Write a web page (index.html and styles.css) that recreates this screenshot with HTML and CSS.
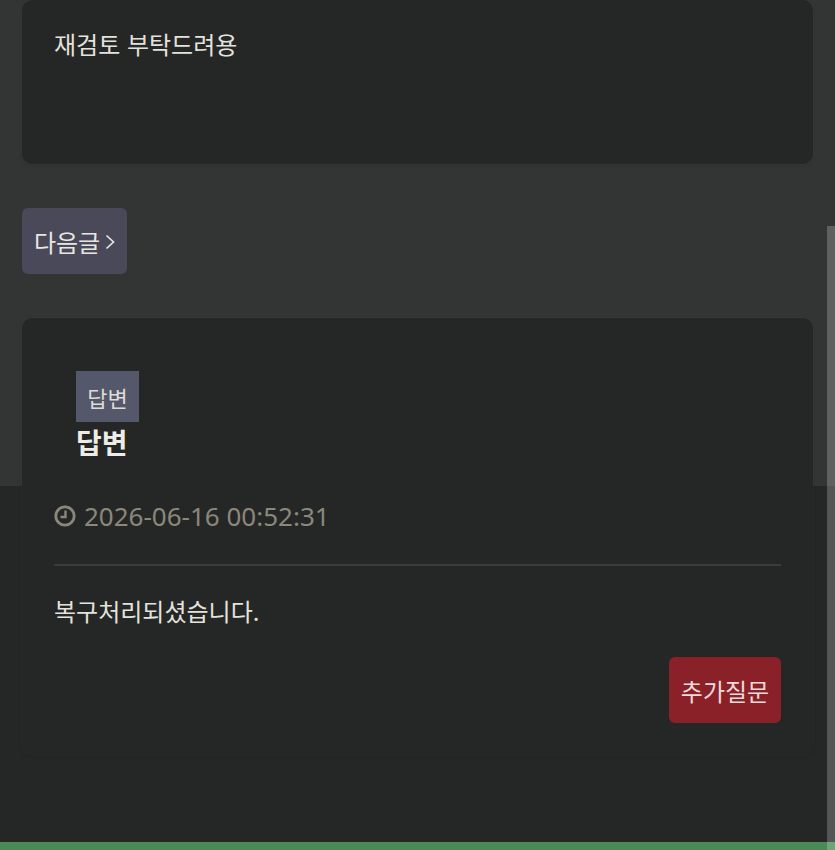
FILE: index.html
```html
<!DOCTYPE html>
<html lang="ko">
<head>
<meta charset="utf-8"/>
<title>답변</title>
<link rel="stylesheet" href="styles.css">
</head>
<body>
<div class="page">
  <div class="card card-question">
    <p class="body-text">재검토 부탁드려용</p>
  </div>

  <a class="btn btn-next">다음글
    <svg class="chevron" viewBox="0 0 10 16" width="10" height="16"><path d="M1.5 1.5 8.5 8 1.5 14.5" fill="none" stroke="currentColor" stroke-width="1.7"/></svg>
  </a>

  <div class="card card-answer">
    <div class="answer-head">
      <span class="badge">답변</span>
      <h3 class="answer-title">답변</h3>
    </div>
    <div class="answer-date">
      <svg class="clock" viewBox="0 0 22 22" width="22" height="22"><circle cx="11" cy="11" r="9.2" fill="none" stroke="currentColor" stroke-width="2.8"/><path d="M11.5 5.5V12H6.5" fill="none" stroke="currentColor" stroke-width="2.4"/></svg>
      <span>2026-06-16 00:52:31</span>
    </div>
    <hr class="divider">
    <p class="body-text answer-text">복구처리되셨습니다.</p>
    <div class="answer-actions">
      <a class="btn btn-ask">추가질문</a>
    </div>
  </div>
</div>
<div class="footer-bar"></div>
<div class="scrollbar"></div>
</body>
</html>
```

FILE: styles.css
```css
html, body {
   margin: 0;
   height: 850px;
   overflow: hidden;
}

body {
   position: relative;
   font-family: "Noto Sans CJK KR", "Noto Sans", sans-serif;
   background-color: #252726;
   color: #e4e2dc;
}

.page {
   height: 842px;
   box-sizing: border-box;
   padding: 0 22px;
   width: 835px;
   background: linear-gradient(to bottom, #333534 486px, #252726 486px);
}

.card {
   width: 791px;
   box-sizing: border-box;
   background-color: #252726;
   border-radius: 10px;
   padding: 0 32px;
   box-shadow: 0 1px 4px rgba(0, 0, 0, 0.12), 0 0 0 1px rgba(255, 255, 255, 0.02);
}

.card-question {
   height: 164px;
   padding-top: 26px;
}

.body-text {
   margin: 0;
   font-size: 24px;
   line-height: 36px;
}

.btn {
   display: inline-flex;
   align-items: center;
   justify-content: center;
   height: 66px;
   box-sizing: border-box;
   border-radius: 6px;
   font-size: 24px;
   color: #e8e6e2;
}

.btn-next {
   display: flex;
   width: 105px;
   margin-top: 44px;
   gap: 5px;
   background-color: #4a4959;
}

.chevron {
   margin-top: 1px;
}

.card-answer {
   height: 437px;
   margin-top: 44px;
   padding-top: 53px;
}

.answer-head {
   padding-left: 22px;
}

.badge {
   display: flex;
   align-items: center;
   justify-content: center;
   width: 63px;
   height: 51px;
   background-color: #55586a;
   font-size: 22px;
   color: #dddcd8;
}

.answer-title {
   margin: 0;
   font-size: 28px;
   line-height: 40px;
   font-weight: 700;
   color: #eeece6;
}

.answer-date {
   display: flex;
   align-items: center;
   gap: 8px;
   margin-top: 36px;
   font-family: "Noto Sans", sans-serif;
   font-size: 26px;
   line-height: 36px;
   color: #8b877b;
}

.divider {
   height: 0;
   margin: 30px 0 0;
   border: none;
   border-top: 2px solid #3a3c3b;
}

.answer-text {
   margin-top: 27px;
}

.answer-actions {
   display: flex;
   justify-content: flex-end;
   margin-top: 28px;
}

.btn-ask {
   width: 112px;
   background-color: #8a2128;
   color: #eedada;
}

.footer-bar {
   height: 8px;
   background-color: #4a8a57;
}

.scrollbar {
   position: absolute;
   top: 226px;
   right: 0;
   bottom: 0;
   width: 8px;
   background-color: rgba(255, 255, 255, 0.22);
}
```
